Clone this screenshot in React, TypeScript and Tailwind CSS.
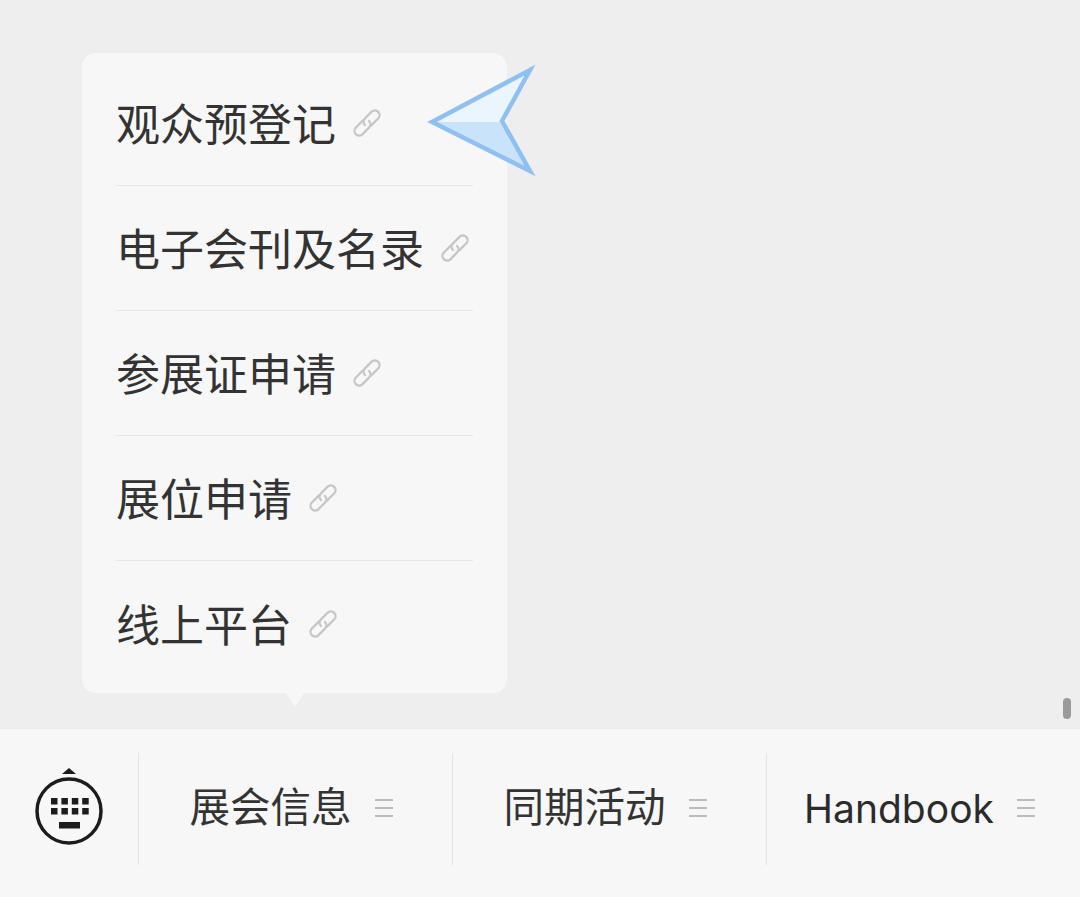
const menuItems = ['观众预登记', '电子会刊及名录', '参展证申请', '展位申请', '线上平台'];
const tabs = ['展会信息', '同期活动', 'Handbook'];

function ChainIcon() {
  return (
    <svg width="28" height="28" viewBox="3.5 3.5 21 21" fill="none" className="shrink-0 text-[#c6c6c6]">
      <path
        d="M11 12L5.5 17.5A3.54 3.54 0 0 0 10.5 22.5L15.5 17.5A3.54 3.54 0 0 0 15.5 12.5"
        stroke="currentColor"
        strokeWidth="1.7"
        strokeLinecap="round"
      />
      <path
        d="M17 16L22.5 10.5A3.54 3.54 0 0 0 17.5 5.5L12.5 10.5A3.54 3.54 0 0 0 12.5 15.5"
        stroke="currentColor"
        strokeWidth="1.7"
        strokeLinecap="round"
      />
    </svg>
  );
}

function MenuLines() {
  return (
    <svg width="18" height="18" viewBox="0 0 18 18" className="shrink-0 text-[#bcbcbc]">
      <path d="M0 1h18M0 9h18M0 17h18" stroke="currentColor" strokeWidth="2" fill="none" />
    </svg>
  );
}

function KeyboardIcon() {
  const keys = [0, 1, 2, 3];
  return (
    <svg width="72" height="84" viewBox="0 0 72 84" className="text-[#1c1c1c]">
      <path d="M36 1l7 6H29z" fill="currentColor" />
      <circle cx="36" cy="44" r="32" stroke="currentColor" strokeWidth="3.5" fill="none" />
      {keys.map((k) => (
        <g key={k} fill="currentColor">
          <rect x={18 + k * 10.4} y="31" width="6.5" height="6.5" />
          <rect x={18 + k * 10.4} y="41" width="6.5" height="6.5" />
        </g>
      ))}
      <rect x="26" y="55" width="21" height="6.5" fill="currentColor" />
    </svg>
  );
}

export default function App() {
  return (
    <div className="relative flex h-[897px] w-[1080px] flex-col overflow-hidden bg-[#eeeeee] font-['Inter','Noto_Sans_CJK_SC',sans-serif]">
      <div className="relative h-[728px] shrink-0 pl-[82px] pt-[53px]">
        <div className="relative flex h-[640px] w-[425px] flex-col rounded-[14px] bg-[#f7f7f7] px-[34px] pt-[8px]">
          {menuItems.map((item, i) => (
            <div
              key={item}
              className={`flex h-[125px] shrink-0 items-center gap-[17px] ${i < menuItems.length - 1 ? 'border-b border-[#e7e7e7]' : ''}`}
            >
              <span className="pt-[4px] text-[44px] leading-none text-[#333333]">{item}</span>
              <ChainIcon />
            </div>
          ))}
          <div className="absolute bottom-[-14px] left-[204px] h-0 w-0 border-x-[9px] border-t-[14px] border-x-transparent border-t-[#f7f7f7]" />
        </div>

        <svg width="112" height="114" viewBox="0 0 112 114" className="absolute left-[425px] top-[64px]">
          <path d="M7 58L105 6L77 57L77 58L105 107Z" fill="#eaf5fe" />
          <path d="M7 58H77L105 107Z" fill="#c9e3fb" />
          <path d="M7 58L105 6L77 57L105 107Z" fill="none" stroke="#8fc0f2" strokeWidth="4.5" strokeLinejoin="miter" />
        </svg>

        <div className="absolute left-[1063px] top-[698px] h-[21px] w-[8px] rounded-full bg-[#9a9a9a]" />
      </div>

      <div className="flex h-[169px] items-start border-t border-[#ececec] bg-[#f7f7f7] pt-[24px]">
        <div className="flex h-[112px] w-[139px] shrink-0 items-center justify-center border-r border-[#e4e4e4]">
          <KeyboardIcon />
        </div>
        {tabs.map((tab, i) => (
          <div
            key={tab}
            className={`flex h-[112px] w-[314px] shrink-0 items-center justify-center gap-[23px] pb-[2px] pr-[9px] ${i < tabs.length - 1 ? 'border-r border-[#e4e4e4]' : ''}`}
          >
            <span className={i === 2 ? 'text-[39px] leading-none text-[#2b2b2b]' : 'text-[40.5px] leading-none text-[#333333]'}>
              {tab}
            </span>
            <MenuLines />
          </div>
        ))}
      </div>
    </div>
  );
}
